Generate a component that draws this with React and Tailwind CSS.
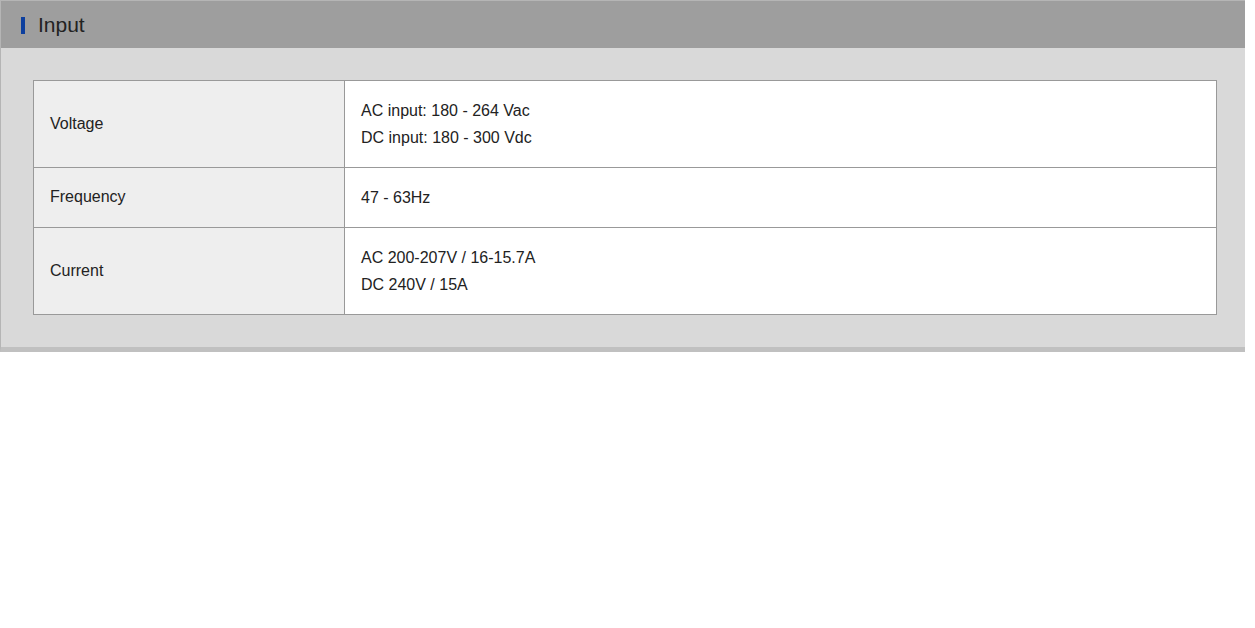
const rows = [
  { label: 'Voltage', values: ['AC input: 180 - 264 Vac', 'DC input: 180 - 300 Vdc'] },
  { label: 'Frequency', values: ['47 - 63Hz'] },
  { label: 'Current', values: ['AC 200-207V / 16-15.7A', 'DC 240V / 15A'] },
]

export default function App() {
  return (
    <div className="w-[1245px] bg-white" style={{ fontFamily: '"Liberation Sans", Arial, sans-serif' }}>
      <div className="border-l border-t border-[#b5b5b5] border-b-[5px] border-b-[#c0c0c0]">
        <div className="h-[47px] bg-[#9e9e9e] flex items-center pl-[20px]">
          <span className="w-[4px] h-[17px] bg-[#0d3f9e] mr-[13px] mt-[2px]" />
          <h2 className="text-[21px] text-[#222] leading-none">Input</h2>
        </div>
        <div className="bg-[#d9d9d9] pl-[32px] pr-[28px] pt-[32px] pb-[32px]">
          <table className="w-full border-collapse border border-[#999] text-[16px] text-[#222]">
            <tbody>
              {rows.map((r) => (
                <tr key={r.label} className="border-b border-[#999]">
                  <td className="w-[311px] bg-[#eeeeee] border-r border-[#999] px-4 pt-[15px] pb-[17px] leading-[27px] align-middle">
                    {r.label}
                  </td>
                  <td className="bg-white px-4 py-4 leading-[27px]">
                    {r.values.map((v) => (
                      <div key={v}>{v}</div>
                    ))}
                  </td>
                </tr>
              ))}
            </tbody>
          </table>
        </div>
      </div>
    </div>
  )
}
